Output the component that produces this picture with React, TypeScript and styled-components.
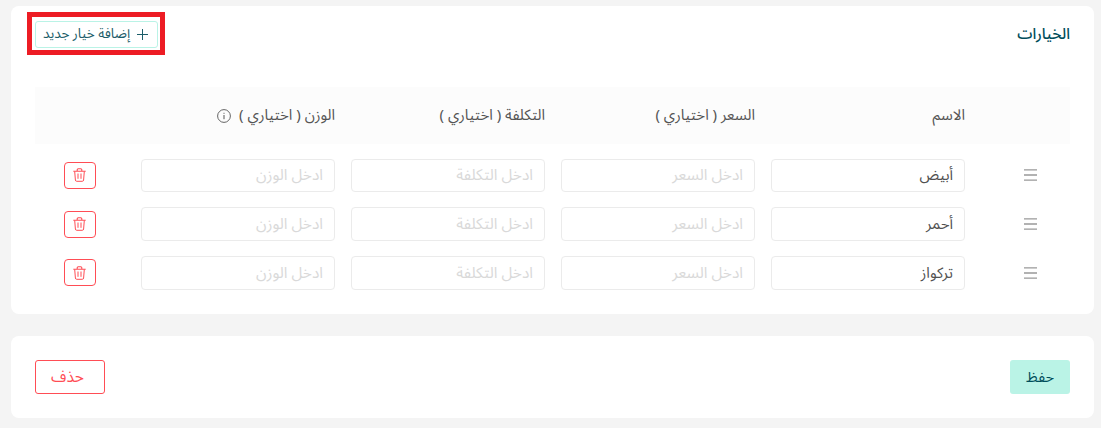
import React from "react";
import styled, { createGlobalStyle } from "styled-components";

const GlobalStyle = createGlobalStyle`
  *, *::before, *::after { box-sizing: border-box; }
  body { margin: 0; background: #f4f4f4; }
  body, button, input { font-family: "Noto Sans Arabic", "DejaVu Sans", sans-serif; font-weight: 400; }
`;

const Page = styled.main`
  direction: rtl;
  height: 428px;
  padding: 6px 7px 10px 11px;
  display: flex;
  flex-direction: column;
  gap: 22px;
  overflow: hidden;
`;

const Card = styled.section<{ $height: number }>`
  height: ${(p) => p.$height}px;
  flex: none;
  background: #fff;
  border-radius: 8px;
  padding: 0 24px;
`;

const CardHeader = styled.header`
  height: 81px;
  padding-top: 6px;
  display: flex;
  justify-content: space-between;
  align-items: flex-start;
`;

const Title = styled.h2`
  margin: 0;
  color: #004d5a;
  font-size: 15.3px;
  font-weight: 550;
  line-height: 44px;
`;

const Highlight = styled.div`
  width: 138px;
  height: 43px;
  margin-left: -8px;
  padding: 4px 2px 4px 3px;
  border: 5px solid #ed1c24;
  display: flex;
`;

const AddButton = styled.button`
  width: 123px;
  height: 27px;
  padding: 0 9px 0 7px;
  display: flex;
  align-items: center;
  justify-content: space-between;
  border: 1px solid #baf3e6;
  border-radius: 3px;
  background: #fff;
  color: #1c5d69;
  font-size: 13.5px;
  line-height: 23px;
  white-space: nowrap;
`;

const AddLabel = styled.span`
  padding-bottom: 2px;
`;

const columns = "97px repeat(4, 210px) 98px";

const TableHead = styled.div`
  display: grid;
  grid-template-columns: ${columns};
  height: 57px;
  background: #fcfcfc;
`;

const HeadCell = styled.div`
  display: flex;
  align-items: center;
  gap: 8px;
  padding: 0 8px;
  color: #555;
  font-size: 15px;
  white-space: nowrap;
`;

const HeadLabel = styled.span`
  padding-bottom: 2px;
`;

const TableBody = styled.div`
  padding-top: 7.1px;
`;

const Row = styled.div`
  display: grid;
  grid-template-columns: ${columns};
  align-items: center;
  height: 48.7px;
`;

const Cell = styled.div`
  display: flex;
  justify-content: center;
  padding: 0 8px;
`;

const Input = styled.input`
  width: 194px;
  height: 33.7px;
  padding: 0 11px;
  border: 1px solid #ebebeb;
  border-radius: 4px;
  background: #fff;
  color: #505050;
  font-size: 15px;
  outline: none;
  &::placeholder { color: #d9d9d9; opacity: 1; font-size: 15.5px; }
`;

const HandleCell = styled(Cell)`
  padding: 0 0 0 18px;
  color: #999;
`;

const DeleteButton = styled.button`
  width: 32px;
  height: 27px;
  padding: 0 1px 0 0;
  display: flex;
  align-items: center;
  justify-content: center;
  border: 1px solid #ff4d55;
  border-radius: 4px;
  background: #fff;
  color: #ff4d55;
`;

const DeleteCell = styled(Cell)`
  padding: 0 8px 0 0;
`;

const Footer = styled.footer`
  height: 100%;
  display: flex;
  align-items: center;
  justify-content: space-between;
`;

const SaveButton = styled.button`
  width: 60px;
  height: 34px;
  padding: 0;
  border: 0;
  border-radius: 3px;
  background: #baf3e6;
  color: #004d5a;
  font-size: 14.7px;
`;

const RemoveButton = styled.button`
  width: 70px;
  height: 34px;
  padding: 0 19px 0 14px;
  border: 1px solid #ff4d55;
  border-radius: 3px;
  background: #fff;
  color: #ff4d55;
  font-size: 15.6px;
`;

const PlusIcon = () => (
  <svg width="11" height="11" viewBox="0 0 11 11" stroke="currentColor" fill="none">
    <path d="M5.5 0v11M0 5.5h11" />
  </svg>
);

const InfoIcon = () => (
  <svg width="14" height="14" viewBox="0 0 14 14" stroke="currentColor" fill="none">
    <circle cx="7" cy="7" r="6.4" strokeWidth="0.9" />
    <path d="M7 6v4.2M7 3.8v1" strokeWidth="1" />
  </svg>
);

const HandleIcon = () => (
  <svg width="13" height="12" viewBox="0 0 13 12" stroke="currentColor" fill="none">
    <path d="M0 .8h13M0 6h13M0 11.2h13" strokeWidth="1.3" />
  </svg>
);

const TrashIcon = () => (
  <svg width="13" height="14" viewBox="0 0 13 14" stroke="currentColor" fill="none">
    <path d="M.3 3.2h12.4M4.2 3V1.8q0-1 1-1h2.6q1 0 1 1V3" strokeWidth="1.1" />
    <path d="M1.7 3.4l.7 8.6q.1 1.3 1.3 1.3h5.6q1.2 0 1.3-1.3l.7-8.6" strokeWidth="1" />
    <path d="M5 5.5v5.3M8 5.5v5.3" strokeWidth="1" />
  </svg>
);

const options = ["أبيض", "أحمر", "تركواز"];

export default function App() {
  return (
    <>
      <GlobalStyle />
      <Page lang="ar">
        <Card $height={308}>
          <CardHeader>
            <Title>الخيارات</Title>
            <Highlight>
              <AddButton>
                <PlusIcon />
                <AddLabel>إضافة خيار جديد</AddLabel>
              </AddButton>
            </Highlight>
          </CardHeader>
          <TableHead>
            <HeadCell />
            <HeadCell><HeadLabel>الاسم</HeadLabel></HeadCell>
            <HeadCell><HeadLabel>السعر ( اختياري )</HeadLabel></HeadCell>
            <HeadCell><HeadLabel>التكلفة ( اختياري )</HeadLabel></HeadCell>
            <HeadCell>
              <HeadLabel>الوزن ( اختياري )</HeadLabel>
              <InfoIcon />
            </HeadCell>
            <HeadCell />
          </TableHead>
          <TableBody>
            {options.map((name) => (
              <Row key={name}>
                <HandleCell><HandleIcon /></HandleCell>
                <Cell><Input defaultValue={name} /></Cell>
                <Cell><Input placeholder="ادخل السعر" /></Cell>
                <Cell><Input placeholder="ادخل التكلفة" /></Cell>
                <Cell><Input placeholder="ادخل الوزن" /></Cell>
                <DeleteCell>
                  <DeleteButton aria-label="حذف"><TrashIcon /></DeleteButton>
                </DeleteCell>
              </Row>
            ))}
          </TableBody>
        </Card>
        <Card $height={82}>
          <Footer>
            <SaveButton>حفظ</SaveButton>
            <RemoveButton>حذف</RemoveButton>
          </Footer>
        </Card>
      </Page>
    </>
  );
}
